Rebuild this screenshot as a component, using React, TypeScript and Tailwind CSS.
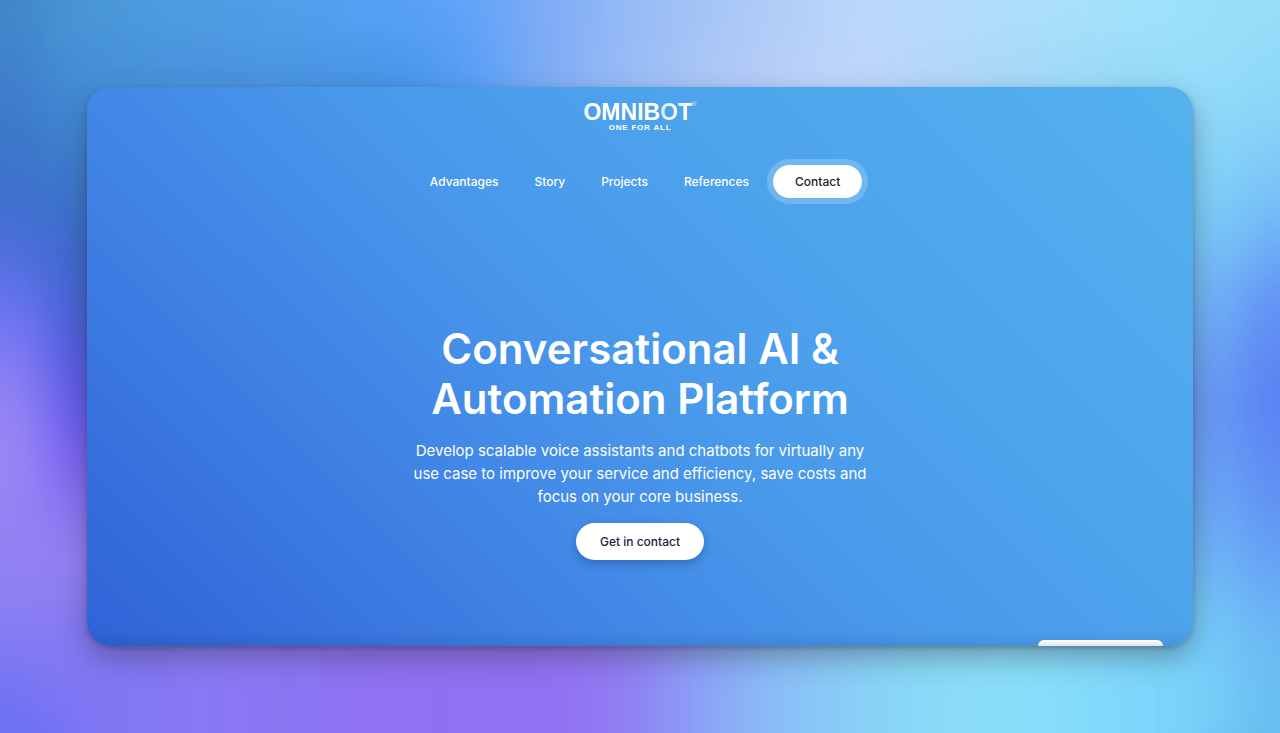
const links = ["Advantages", "Story", "Projects", "References"];

type Stop = [number, string];

type Band = {
  id: string;
  x: number;
  y: number;
  width: number;
  height: number;
  vertical: boolean;
  stops: Stop[];
};

// Colour bands that melt into each other once the group is blurred.
const bands: Band[] = [
  {
    id: "left-outer", x: -120, y: 0, width: 165, height: 733, vertical: true,
    stops: [[0, "#4289c8"], [0.1, "#3f80cb"], [0.22, "#3c74c9"], [0.3, "#426fd2"], [0.37, "#5670e4"], [0.44, "#7076f4"], [0.52, "#8c80f4"], [0.6, "#9b87f6"], [0.7, "#9783f4"], [0.82, "#8d80f2"], [0.9, "#7c78f3"], [1, "#6a6ff4"]],
  },
  {
    id: "left-inner", x: 45, y: 0, width: 125, height: 733, vertical: true,
    stops: [[0, "#4a96d6"], [0.1, "#448ed6"], [0.2, "#3e80cd"], [0.32, "#3b6bcb"], [0.42, "#4262d4"], [0.5, "#5058e0"], [0.57, "#6458ee"], [0.66, "#8268f2"], [0.75, "#9480f2"], [0.88, "#8a7cf2"], [1, "#7a74f4"]],
  },
  {
    id: "right-inner", x: 1110, y: 0, width: 130, height: 733, vertical: true,
    stops: [[0, "#9ee2fb"], [0.15, "#90daf8"], [0.3, "#7accf8"], [0.42, "#6fb0f4"], [0.55, "#6798f3"], [0.68, "#6ba6f5"], [0.8, "#70bcf6"], [1, "#7ad2fa"]],
  },
  {
    id: "right-outer", x: 1240, y: 0, width: 160, height: 733, vertical: true,
    stops: [[0, "#98def8"], [0.15, "#8ad6f8"], [0.28, "#76bff7"], [0.4, "#6394f5"], [0.53, "#5a80f3"], [0.65, "#5e8cf4"], [0.78, "#66a4f4"], [0.88, "#6cbcf4"], [1, "#66bfef"]],
  },
  {
    id: "top-inner", x: 100, y: 45, width: 1060, height: 100, vertical: false,
    stops: [[0, "#4490d8"], [0.15, "#4a94df"], [0.28, "#4994e6"], [0.34, "#529df8"], [0.38, "#66a4f6"], [0.44, "#88b0f4"], [0.52, "#9dbff7"], [0.6, "#b2c9f6"], [0.7, "#bfd6fb"], [0.8, "#b2d6f8"], [0.9, "#a0daf8"], [1, "#94daf7"]],
  },
  {
    id: "top-outer", x: 60, y: -120, width: 1120, height: 165, vertical: false,
    stops: [[0, "#4794d4"], [0.1, "#4e9bdf"], [0.2, "#519ee9"], [0.3, "#55a1f8"], [0.36, "#5fa2f8"], [0.44, "#80acf5"], [0.52, "#99bdf6"], [0.62, "#adcaf7"], [0.72, "#bcd8fa"], [0.8, "#b5dcfa"], [0.9, "#a8e0fa"], [1, "#9de3fb"]],
  },
  {
    id: "bottom", x: 70, y: 600, width: 1140, height: 260, vertical: false,
    stops: [[0, "#7d76f4"], [0.12, "#8878f3"], [0.28, "#8f71f2"], [0.42, "#936ff2"], [0.49, "#8f7ef3"], [0.55, "#8ba0f6"], [0.62, "#8abef7"], [0.72, "#88d6f7"], [0.82, "#8be0f9"], [0.92, "#7fd8fb"], [1, "#75cff9"]],
  },
];

function Backdrop() {
  return (
    <svg
      className="absolute inset-0 h-full w-full"
      viewBox="0 0 1280 733"
      preserveAspectRatio="none"
      aria-hidden="true"
    >
      <defs>
        <filter id="melt" filterUnits="userSpaceOnUse" x="-150" y="-150" width="1580" height="1033">
          <feGaussianBlur stdDeviation="24" />
        </filter>
        {bands.map((b) => (
          <linearGradient key={b.id} id={b.id} x1="0" y1="0" x2={b.vertical ? 0 : 1} y2={b.vertical ? 1 : 0}>
            {b.stops.map(([offset, color]) => (
              <stop key={offset} offset={offset} stopColor={color} />
            ))}
          </linearGradient>
        ))}
      </defs>
      <g filter="url(#melt)">
        <rect x="-150" y="-150" width="1580" height="300" fill="#70b0ec" />
        <rect x="-150" y="-150" width="270" height="300" fill="#4289c8" />
        <rect x="1160" y="-150" width="270" height="300" fill="#98def8" />
        <rect x="-150" y="600" width="270" height="300" fill="#6a6ff4" />
        <rect x="1160" y="600" width="270" height="300" fill="#66bfef" />
        {bands.map((b) => (
          <rect key={b.id} x={b.x} y={b.y} width={b.width} height={b.height} fill={`url(#${b.id})`} />
        ))}
      </g>
    </svg>
  );
}

function Logo() {
  return (
    <a href="#top" aria-label="Omnibot, one for all" className="flex flex-col items-center font-['Liberation_Sans',Arial,sans-serif] font-bold text-white">
      <span className="flex text-[23px] leading-[22px]">
        OMNIB
        <span className="bg-linear-to-r from-[#d3e9fb] to-white bg-clip-text text-transparent">O</span>T
        <span className="text-[6px] leading-[6px] font-normal text-white/80">®</span>
      </span>
      <span className="text-[8px] leading-[10px] tracking-widest">ONE FOR ALL</span>
    </a>
  );
}

export default function App() {
  return (
    <div className="relative isolate flex min-h-screen overflow-hidden bg-[#6c8ef0] p-[87px] font-[Inter,sans-serif]">
      <Backdrop />
      <div
        id="top"
        className="relative flex flex-1 flex-col items-center overflow-hidden rounded-3xl bg-[linear-gradient(45deg,#2f62d8_0%,#3a76df_18%,#4288e7_34%,#4999eb_50%,#4da3ec_68%,#54b2ee_100%)] shadow-[0_12px_28px_rgba(50,50,60,0.38),0_2px_4px_rgba(40,40,60,0.28)]"
      >
        <header className="flex flex-col items-center pt-[14px]">
          <Logo />
          <nav aria-label="Main" className="mt-[26px] flex items-center text-xs font-medium text-white">
            {links.map((label) => (
              <a key={label} href={`#${label.toLowerCase()}`} className="px-[18px] py-2">
                {label}
              </a>
            ))}
            <a
              href="#contact"
              className="rounded-full border-[6px] border-white/20 bg-white bg-clip-padding px-[22px] py-2 leading-[17px] text-[#222]"
            >
              Contact
            </a>
          </nav>
        </header>

        <main className="mt-[120px] flex flex-col items-center px-6 text-center text-white">
          <h1 className="max-w-[480px] text-[42px] leading-[50px] font-semibold">
            Conversational AI &amp; Automation Platform
          </h1>
          <p className="mt-[15px] max-w-[470px] text-[15px] leading-[23px]">
            Develop scalable voice assistants and chatbots for virtually any use case to improve your service and
            efficiency, save costs and focus on your core business.
          </p>
          <button
            type="button"
            className="mt-[15px] rounded-full bg-white px-6 text-xs leading-[37px] font-medium text-[#1b2145] shadow-[0_4px_10px_rgba(20,50,110,0.35)]"
          >
            Get in contact
          </button>
        </main>

        <div className="absolute inset-x-0 bottom-0 h-4 bg-linear-to-t from-black/8 to-transparent" />
        <div className="absolute right-[30px] bottom-0 h-[6px] w-[125px] rounded-t-lg bg-linear-to-b from-white to-[#e4e4e4]" />
      </div>
    </div>
  );
}
